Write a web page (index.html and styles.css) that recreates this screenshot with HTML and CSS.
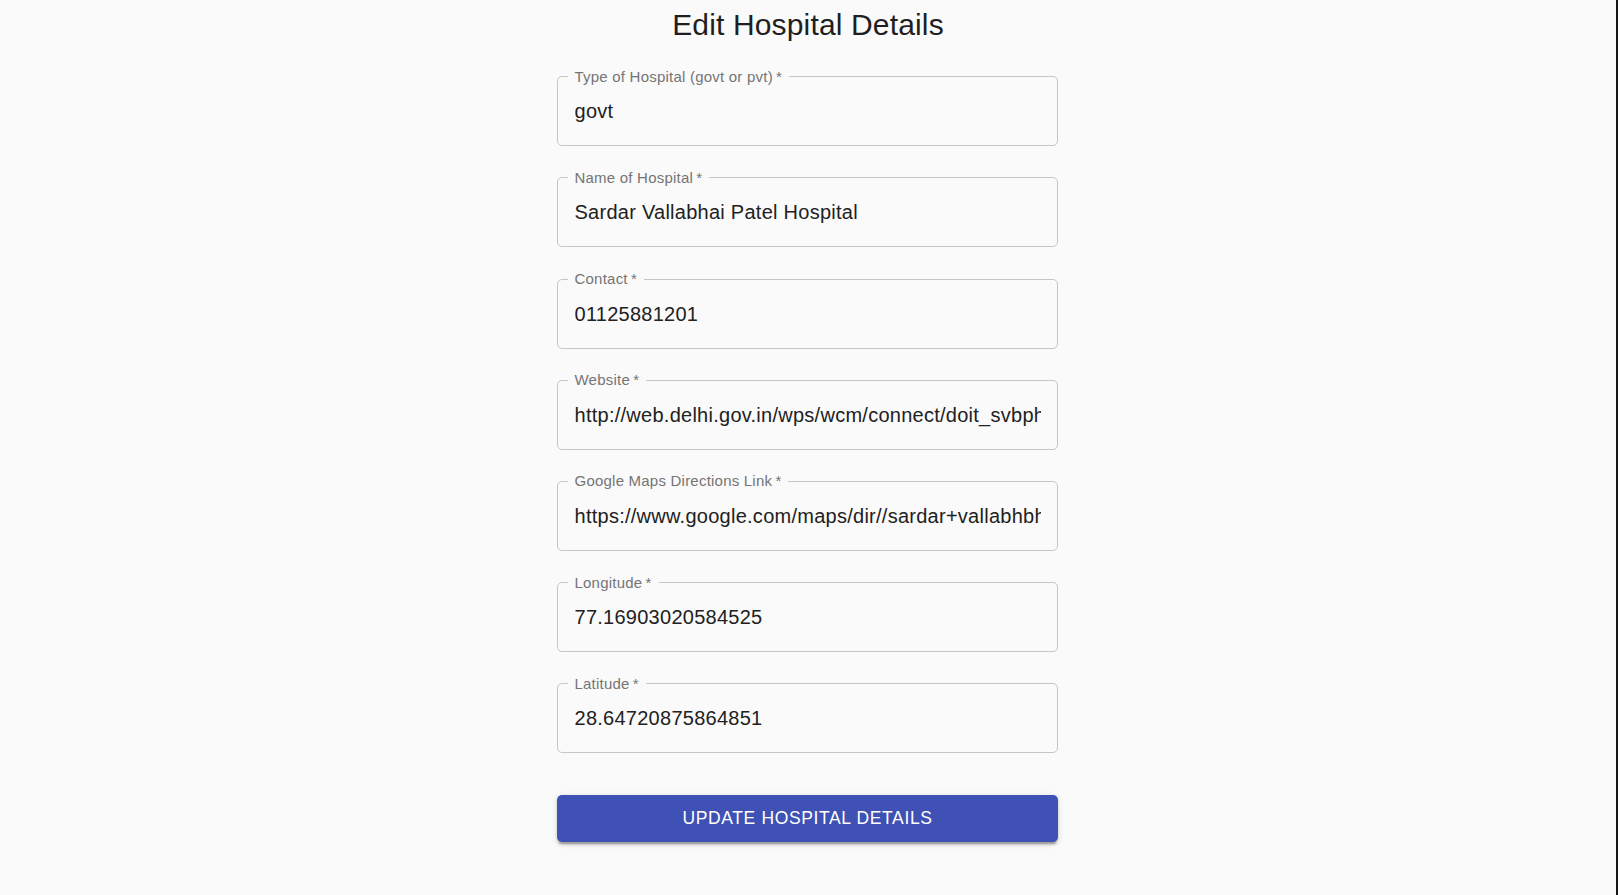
FILE: index.html
```html
<!DOCTYPE html>
<html lang="en">
<head>
<meta charset="utf-8">
<title>Edit Hospital Details</title>
<link rel="stylesheet" href="styles.css">
</head>
<body>
<main class="page">
  <h1 class="title">Edit Hospital Details</h1>
  <form class="form">
    <fieldset class="field">
      <legend class="label">Type of Hospital (govt or pvt)&thinsp;*</legend>
      <input class="input" type="text" value="govt">
    </fieldset>
    <fieldset class="field">
      <legend class="label">Name of Hospital&thinsp;*</legend>
      <input class="input" type="text" value="Sardar Vallabhai Patel Hospital">
    </fieldset>
    <fieldset class="field">
      <legend class="label">Contact&thinsp;*</legend>
      <input class="input" type="text" value="01125881201">
    </fieldset>
    <fieldset class="field">
      <legend class="label">Website&thinsp;*</legend>
      <input class="input" type="text" value="http://web.delhi.gov.in/wps/wcm/connect/doit_svbphospital/SVBP/Home">
    </fieldset>
    <fieldset class="field">
      <legend class="label">Google Maps Directions Link&thinsp;*</legend>
      <input class="input" type="text" value="https://www.google.com/maps/dir//sardar+vallabhbhai+patel+hospital">
    </fieldset>
    <fieldset class="field">
      <legend class="label">Longitude&thinsp;*</legend>
      <input class="input" type="text" value="77.16903020584525">
    </fieldset>
    <fieldset class="field">
      <legend class="label">Latitude&thinsp;*</legend>
      <input class="input" type="text" value="28.64720875864851">
    </fieldset>
    <button class="submit" type="button">Update Hospital Details</button>
  </form>
</main>
</body>
</html>
```

FILE: styles.css
```css
html, body {
  margin: 0;
  padding: 0;
  background: #fafafa;
}

body {
  font-family: "Liberation Sans", Arial, sans-serif;
  color: rgba(0, 0, 0, 0.87);
}

.page {
  box-sizing: border-box;
  min-height: 100vh;
  border-right: 2px solid #161616;
  display: flex;
  flex-direction: column;
  align-items: center;
}

.title {
  margin: 0;
  padding-top: 5px;
  font-size: 30px;
  line-height: 40px;
  font-weight: 400;
  letter-spacing: 0.15px;
  color: #1f1f1f;
  text-align: center;
}

.form {
  width: 501px;
  margin-top: 24.7px;
  margin-right: 1px;
  display: flex;
  flex-direction: column;
  gap: 24.7px;
}

.field {
  margin: 0;
  padding: 0;
  min-width: 0;
  border: 1px solid #c6c6c6;
  border-radius: 5px;
}

.label {
  margin-left: 9.5px;
  padding: 0 7px;
  font-size: 15px;
  line-height: 14px;
  letter-spacing: 0.22px;
  color: #757575;
  white-space: nowrap;
}

.input {
  display: block;
  width: 100%;
  box-sizing: border-box;
  height: 61.5px;
  margin: 0;
  padding: 16.3px 16.5px 21.6px;
  border: none;
  outline: none;
  background: transparent;
  font-family: "Liberation Sans", Arial, sans-serif;
  font-size: 20px;
  letter-spacing: 0.26px;
  color: #212121;
}

.submit {
  margin-top: 17.4px;
  height: 46.3px;
  border: none;
  border-radius: 5px;
  background: #3f51b5;
  color: #ffffff;
  font-family: "Liberation Sans", Arial, sans-serif;
  font-size: 17.5px;
  font-weight: 500;
  letter-spacing: 0.63px;
  text-transform: uppercase;
  box-shadow: 0 3.75px 1.25px -2.5px rgba(0, 0, 0, 0.2),
              0 2.5px 2.5px 0 rgba(0, 0, 0, 0.14),
              0 1.25px 6.25px 0 rgba(0, 0, 0, 0.12);
  cursor: pointer;
}
```
